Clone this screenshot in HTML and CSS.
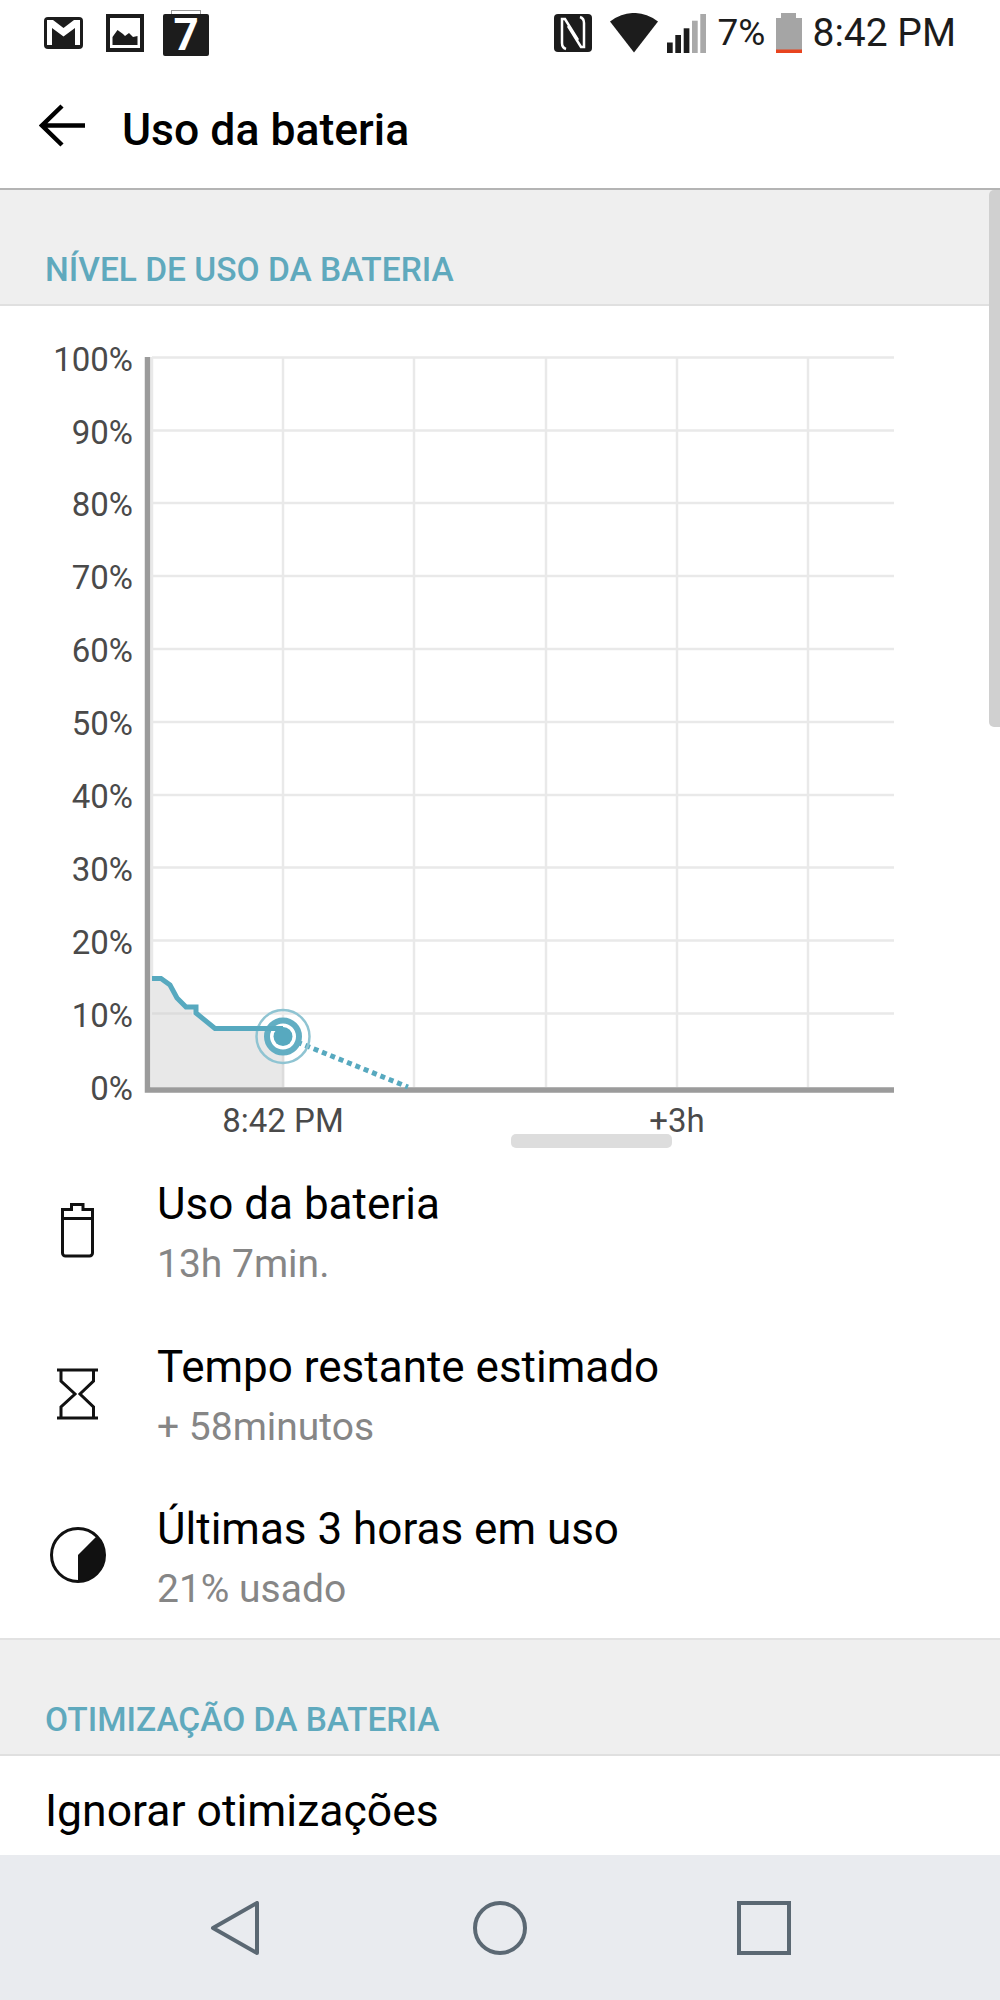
FILE: index.html
```html
<!DOCTYPE html>
<html lang="pt">
<head>
    <meta charset="UTF-8">
    <meta name="viewport" content="width=device-width, initial-scale=1.0">
    <title>Uso da bateria</title>
    <link rel="stylesheet" href="styles.css">
</head>
<body>
<div class="screen">

    <!-- barra de status -->
    <div class="status-bar">
        <svg class="ic-mail" viewBox="0 0 39 32">
            <rect width="39" height="32" rx="4" fill="#1c1c1c"/>
            <path d="M3 3H9L19.500 11 30 3h6v25h-5V11L19.500 19.500 8 11v17H3z" fill="#fff"/>
        </svg>
        <svg class="ic-photo" viewBox="0 0 38 38">
            <rect width="38" height="38" fill="#1c1c1c"/>
            <rect x="4" y="4" width="30" height="30" fill="#fff"/>
            <path d="M6.500 31V23L11.500 16L17 20L19 22L23 19L27 23L31.500 22V31Z" fill="#1c1c1c"/>
        </svg>
        <div class="ic-cal">7</div>
        <span class="status-gap"></span>
        <svg class="ic-nfc" viewBox="0 0 38 38">
            <rect width="38" height="38" rx="4" fill="#1c1c1c"/>
            <path d="M12 35C9 34 8 32 8 29V5H11L24 26" fill="none" stroke="#fff" stroke-width="2.500"/>
            <path d="M26 3C29 4 30 6 30 9V33H27L14 12" fill="none" stroke="#fff" stroke-width="2.500"/>
        </svg>
        <svg class="ic-wifi" viewBox="0 0 48 40">
            <path d="M24 39.500L0 8.500A38 38 0 0 1 48 8.500z" fill="#1c1c1c"/>
        </svg>
        <svg class="ic-signal" viewBox="0 0 40 39">
            <rect y="28.500" width="5.700" height="10.500" fill="#1c1c1c"/>
            <rect x="8.300" y="21" width="5.700" height="18" fill="#1c1c1c"/>
            <rect x="16.700" y="14.300" width="5.700" height="24.700" fill="#1c1c1c"/>
            <rect x="25" y="6.700" width="5.700" height="32.300" fill="#a9a9a9"/>
            <rect x="33.300" width="5.700" height="39" fill="#a9a9a9"/>
        </svg>
        <span class="status-pct">7%</span>
        <svg class="ic-batt" viewBox="0 0 26 40">
            <path d="M5 0h15v5h6v35H0V5h5z" fill="#a5a5a5"/>
            <rect y="36.500" width="26" height="3.500" fill="#e8441f"/>
        </svg>
        <span class="status-time">8:42 PM</span>
    </div>

    <!-- cabeçalho -->
    <div class="app-bar">
        <svg class="back" viewBox="0 0 46 44">
            <path d="M46 21.500H4M23 2L3 21.500 23 41" fill="none" stroke="#000" stroke-width="4.500"/>
        </svg>
        <h1>Uso da bateria</h1>
    </div>

    <div class="content">
        <div class="scroll-thumb"></div>

        <h2 class="section-title">NÍVEL DE USO DA BATERIA</h2>

        <div class="panel">
            <svg class="chart" viewBox="0 306 1000 849">
                <!-- grade -->
                <g class="grid">
                    <path d="M152 357.500H894M152 430.500H894M152 503H894M152 576H894M152 649H894M152 722H894M152 795H894M152 867.500H894M152 940.500H894M152 1013.500H894"/>
                    <path d="M152 357V1087M283 357V1087M414 357V1087M546 357V1087M677 357V1087M808 357V1087"/>
                </g>

                <!-- área já consumida -->
                <path class="used" d="M152 978H161L170 985L177 998L186 1007H196V1013L215 1028H283V1087H152Z"/>
                <path class="grid-over" d="M152 1013.500H192M283 1040V1087"/>

                <!-- eixos -->
                <path class="axis" d="M147.500 357V1090H894"/>

                <!-- nível da bateria -->
                <path class="forecast" d="M297 1042L408 1087"/>
                <circle class="ring-outer" cx="283" cy="1036.500" r="26.500"/>
                <circle class="ring-mid" cx="283" cy="1036.500" r="16"/>
                <path class="level" d="M152 978.500H161L170 985L177 998L186 1007H196V1013L215 1028.500H283"/>
                <circle class="dot" cx="283" cy="1036.500" r="9.500"/>

                <!-- rótulos -->
                <g class="y-labels">
                    <text x="133" y="370.500">100%</text>
                    <text x="133" y="443.500">90%</text>
                    <text x="133" y="516">80%</text>
                    <text x="133" y="589">70%</text>
                    <text x="133" y="662">60%</text>
                    <text x="133" y="735">50%</text>
                    <text x="133" y="808">40%</text>
                    <text x="133" y="881">30%</text>
                    <text x="133" y="953.500">20%</text>
                    <text x="133" y="1026.500">10%</text>
                    <text x="133" y="1099.500">0%</text>
                </g>
                <g class="x-labels">
                    <text x="283" y="1132">8:42 PM</text>
                    <text x="677" y="1132">+3h</text>
                </g>

                <rect class="chart-thumb" x="511" y="1134" width="161" height="14" rx="5"/>
            </svg>

            <div class="rows">
                <div class="row">
                    <svg class="row-icon" viewBox="0 0 60 60">
                        <path d="M14.500 9.500h9v-5h11.500v5h9.500V53a3 3 0 0 1-3 3h-24a3 3 0 0 1-3-3zM14.500 18.500h30" fill="none" stroke="#111" stroke-width="3"/>
                    </svg>
                    <div class="row-text">
                        <div class="row-title">Uso da bateria</div>
                        <div class="row-sub">13h 7min.</div>
                    </div>
                </div>
                <div class="row">
                    <svg class="row-icon" viewBox="0 0 60 60">
                        <path d="M9 7h41M9 55h41M13 7v11l14 13-14 13v11M45.500 7v11L32 31l13.500 13v11" fill="none" stroke="#111" stroke-width="3"/>
                    </svg>
                    <div class="row-text">
                        <div class="row-title">Tempo restante estimado</div>
                        <div class="row-sub">+ 58minutos</div>
                    </div>
                </div>
                <div class="row">
                    <svg class="row-icon" viewBox="0 0 60 60">
                        <circle cx="30" cy="30" r="26.500" fill="none" stroke="#111" stroke-width="3"/>
                        <path d="M30 30L48.700 11.300A26.500 26.500 0 0 1 30 56.500z" fill="#111"/>
                    </svg>
                    <div class="row-text">
                        <div class="row-title">Últimas 3 horas em uso</div>
                        <div class="row-sub">21% usado</div>
                    </div>
                </div>
            </div>
        </div>

        <h2 class="section-title">OTIMIZAÇÃO DA BATERIA</h2>

        <div class="panel last">
            <div class="plain-row">Ignorar otimizações</div>
        </div>
    </div>

    <!-- barra de navegação -->
    <div class="nav-bar">
        <svg class="nav-btn" viewBox="0 0 54 54">
            <path d="M48 2V52L4 27Z" fill="none" stroke="#5b6873" stroke-width="4" stroke-linejoin="round"/>
        </svg>
        <svg class="nav-btn" viewBox="0 0 54 54">
            <circle cx="27" cy="27" r="25" fill="none" stroke="#5b6873" stroke-width="4"/>
        </svg>
        <svg class="nav-btn" viewBox="0 0 54 54">
            <rect x="2" y="2" width="50" height="50" fill="none" stroke="#5b6873" stroke-width="4"/>
        </svg>
    </div>

</div>
</body>
</html>
```

FILE: styles.css
```css
body {
    margin: 0;
    background-color: #ffffff;
    font-family: Roboto, "Liberation Sans", sans-serif;
}

.screen {
    display: flex;
    flex-direction: column;
    height: 2000px;
    overflow: hidden;
}

.status-bar {
    display: flex;
    align-items: center;
    box-sizing: border-box;
    height: 72px;
    padding: 0 44px 6px;
    flex-shrink: 0;
    color: #1c1c1c;
}

.status-gap {
    flex: 1;
}

.ic-mail { width: 39px; height: 32px; }
.ic-photo { width: 38px; height: 38px; margin-left: 23px; }
.ic-nfc { width: 38px; height: 38px; }
.ic-wifi { width: 48px; height: 40px; margin-left: 18px; }
.ic-signal { width: 40px; height: 39px; margin-left: 9px; }
.ic-batt { width: 26px; height: 40px; margin-left: 11px; }

.ic-cal {
    position: relative;
    width: 46px;
    height: 42px;
    margin: 4px 0 0 19px;
    border-radius: 2px;
    background-color: #1c1c1c;
    color: #ffffff;
    font-size: 44px;
    font-weight: 700;
    line-height: 42px;
    text-align: center;
}

/* presilha do calendário */
.ic-cal::before {
    content: "";
    position: absolute;
    top: -4px;
    left: 8px;
    width: 28px;
    height: 3px;
    border: 1.5px solid #999999;
    border-bottom: none;
}

.status-pct,
.status-time {
    line-height: 40px;
}

.status-pct {
    margin-left: 11px;
    font-size: 37px;
}

.status-time {
    margin-left: 10px;
    font-size: 39px;
}

.app-bar {
    display: flex;
    align-items: center;
    height: 116px;
    padding-left: 39px;
    flex-shrink: 0;
    border-bottom: 2px solid #b4b4b4;
}

.back {
    width: 46px;
    height: 44px;
    margin-top: -8px;
}

.app-bar h1 {
    margin: 0 0 0 37px;
    font-size: 44.500px;
    font-weight: 500;
    color: #000000;
}

.content {
    flex: 1;
    position: relative;
    overflow: hidden;
    background-color: #efefef;
}

.scroll-thumb {
    position: absolute;
    top: 0;
    right: 0;
    width: 11px;
    height: 537px;
    background-color: #d0d0d0;
    border-top-left-radius: 5px;
    border-bottom-left-radius: 5px;
}

.section-title {
    margin: 0;
    padding: 58px 45px 12px;
    height: 44px;
    font-size: 33.500px;
    line-height: 44px;
    font-weight: 500;
    color: #5fa9bd;
    border-bottom: 2px solid #e0e0e0;
}

.panel {
    background-color: #ffffff;
    border-bottom: 2px solid #e2e2e2;
}

.panel.last {
    border-bottom: none;
}

.chart {
    display: block;
    width: 1000px;
    height: 849px;
}

.grid path,
.grid-over {
    fill: none;
    stroke: #e9e9e9;
    stroke-width: 2.500;
}

.grid-over {
    stroke: #dcdcdc;
}

.used {
    fill: #e8e8e8;
}

.axis {
    fill: none;
    stroke: #9b9b9b;
    stroke-width: 5.500;
}

.level {
    fill: none;
    stroke: #57a9bf;
    stroke-width: 5;
}

.forecast {
    fill: none;
    stroke: #57a9bf;
    stroke-width: 5;
    stroke-dasharray: 5 4;
}

.ring-outer {
    fill: none;
    stroke: #8fc4d2;
    stroke-width: 2.500;
}

.ring-mid {
    fill: #ffffff;
    stroke: #62aec3;
    stroke-width: 6;
}

.dot {
    fill: #57a9bf;
}

.y-labels text,
.x-labels text {
    font-size: 33px;
    fill: #4a4a4a;
}

.y-labels text {
    text-anchor: end;
}

.x-labels text {
    text-anchor: middle;
}

.chart-thumb {
    fill: #dddddd;
}

.rows {
    display: flex;
    flex-direction: column;
    gap: 4.500px;
}

.row {
    display: flex;
    align-items: center;
    height: 158px;
}

.row-icon {
    width: 60px;
    height: 60px;
    margin: -8px 0 0 48px;
    flex-shrink: 0;
}

.row-text {
    margin-left: 49px;
}

.row-title {
    font-size: 44px;
    line-height: 60px;
    color: #000000;
}

.row-sub {
    font-size: 39px;
    line-height: 60px;
    color: #868686;
}

.plain-row {
    padding: 28px 45px 0;
    height: 110px;
    font-size: 44.500px;
    line-height: 54px;
    color: #000000;
}

.nav-bar {
    display: flex;
    align-items: center;
    justify-content: center;
    gap: 210px;
    height: 145px;
    flex-shrink: 0;
    background-color: #e9ebef;
}

.nav-btn {
    width: 54px;
    height: 54px;
}
```
